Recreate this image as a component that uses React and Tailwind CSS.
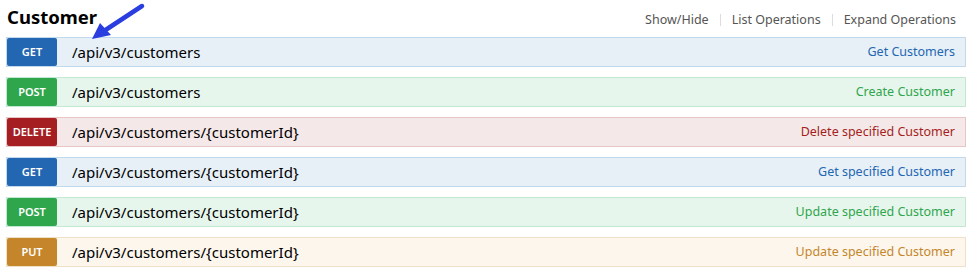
import React from 'react';

const ops = [
  { method: 'GET', path: '/api/v3/customers', summary: 'Get Customers' },
  { method: 'POST', path: '/api/v3/customers', summary: 'Create Customer' },
  { method: 'DELETE', path: '/api/v3/customers/{customerId}', summary: 'Delete specified Customer' },
  { method: 'GET', path: '/api/v3/customers/{customerId}', summary: 'Get specified Customer' },
  { method: 'POST', path: '/api/v3/customers/{customerId}', summary: 'Update specified Customer' },
  { method: 'PUT', path: '/api/v3/customers/{customerId}', summary: 'Update specified Customer' },
];

const styles = {
  GET: { row: 'bg-[#e7f0f7] border-[#c3d9ec]', badge: 'bg-[#2366b1]', text: 'text-[#2366b1]' },
  POST: { row: 'bg-[#e7f6ec] border-[#c3e8d1]', badge: 'bg-[#2fa54c]', text: 'text-[#2fa54c]' },
  DELETE: { row: 'bg-[#f5e8e8] border-[#e8c6c7]', badge: 'bg-[#a41e22]', text: 'text-[#a41e22]' },
  PUT: { row: 'bg-[#fcf6ed] border-[#f0e0ca]', badge: 'bg-[#c5862b]', text: 'text-[#c5862b]' },
};

const Operation = ({ method, path, summary }) => {
  const s = styles[method];
  return (
    <div className={`flex items-center h-[30px] border ${s.row}`}>
      <span className={`flex items-center justify-center w-[50px] h-[28px] rounded-[2px] text-white text-[11px] font-semibold ${s.badge}`}>
        {method}
      </span>
      <span className="ml-[15px] text-[15px] text-black">{path}</span>
      <span className={`ml-auto mr-[10px] text-[12.5px] ${s.text}`}>{summary}</span>
    </div>
  );
};

export default function App() {
  return (
    <div className="relative bg-white w-[975px] h-[276px] pl-[6px] pr-[9px] font-['Noto_Sans','Open_Sans',sans-serif]">
      <div className="flex items-end justify-between h-[37px] pb-[11px]">
        <h2 className="ml-[1px] text-[18.5px] font-bold text-black leading-none">Customer</h2>
        <ul className="flex items-center text-[12.5px] text-[#555] leading-none mr-[10px]">
          <li className="pr-[11px]">Show/Hide</li>
          <li className="px-[11px] border-l border-[#ddd]">List Operations</li>
          <li className="pl-[11px] border-l border-[#ddd]">Expand Operations</li>
        </ul>
      </div>
      <div className="flex flex-col gap-[10px]">
        {ops.map((op, i) => (
          <Operation key={i} {...op} />
        ))}
      </div>
      <svg className="absolute left-0 top-0" width="160" height="50" viewBox="0 0 160 50">
        <line x1="142" y1="6" x2="104" y2="31" stroke="#2a3ddf" strokeWidth="4.5" strokeLinecap="round" />
        <polygon points="92,39 100,23 111,35" fill="#2a3ddf" />
      </svg>
    </div>
  );
}
